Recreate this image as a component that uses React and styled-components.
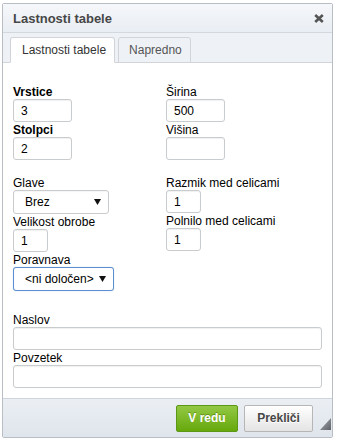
import styled, { createGlobalStyle } from "styled-components";

const GlobalStyle = createGlobalStyle`
  html, body {
    margin: 0;
    padding: 0;
    background: #ffffff;
  }
  body {
    font-family: "Liberation Sans", Arial, sans-serif;
    font-size: 12px;
    color: #000;
  }
`;

const Dialog = styled.div`
  position: relative;
  width: 331px;
  margin: 3px 0 0 2px;
  border: 1px solid #b9bec5;
  border-radius: 2px;
  background: #ffffff;
  box-sizing: border-box;
  width: 331px;
`;

const TitleBar = styled.div`
  display: flex;
  align-items: center;
  justify-content: space-between;
  height: 28px;
  padding: 0 8px 0 10px;
  background: linear-gradient(#f5f7fa, #e9eef4);
  border-bottom: 1px solid #d3d8de;
  font-size: 13px;
  font-weight: bold;
  color: #474747;
`;

const CloseButton = styled.span`
  display: flex;
  width: 10px;
  height: 9px;
  margin-top: 1px;
  cursor: pointer;
`;

const TabBar = styled.div`
  display: flex;
  align-items: flex-end;
  gap: 3px;
  height: 29px;
  padding-left: 7px;
  background: #eef1f5;
  border-bottom: 1px solid #d1d5da;
`;

const Tab = styled.div`
  display: flex;
  align-items: center;
  height: 24px;
  padding: ${({ $active }) => ($active ? "0 8px 0 11px" : "0 8px 0 10px")};
  margin-bottom: -1px;
  border: 1px solid #d1d5da;
  border-bottom: ${({ $active }) => ($active ? "1px solid #fff" : "1px solid #d1d5da")};
  border-radius: 3px 3px 0 0;
  background: ${({ $active }) => ($active ? "#ffffff" : "#eef1f5")};
  color: ${({ $active }) => ($active ? "#333" : "#555")};
  font-size: 12px;
`;

const Body = styled.div`
  padding: 22px 10px 9px 10px;
`;

const Columns = styled.div`
  display: grid;
  grid-template-columns: 153px 1fr;
  margin-bottom: ${({ $gap }) => $gap}px;
`;

const Column = styled.div`
  display: flex;
  flex-direction: column;
`;

const Field = styled.div`
  display: flex;
  flex-direction: column;
  align-items: flex-start;
  margin-bottom: 1px;
`;

const Label = styled.label`
  display: block;
  height: 14px;
  line-height: 14px;
  font-weight: ${({ $bold }) => ($bold ? "bold" : "normal")};
  color: #000;
  white-space: nowrap;
`;

const Input = styled.div`
  box-sizing: border-box;
  width: ${({ $w }) => $w}px;
  height: 23px;
  padding-left: 7px;
  display: flex;
  align-items: center;
  border: 1px solid #c9cccf;
  border-radius: 3px;
  box-shadow: inset 0 1px 1px rgba(0, 0, 0, 0.06);
  background: #fff;
  font-size: 12px;
  color: #000;
`;

const Select = styled.div`
  box-sizing: border-box;
  width: ${({ $w }) => $w}px;
  height: 24px;
  display: flex;
  align-items: center;
  justify-content: space-between;
  padding: 0 7px 0 11px;
  border: 1px solid ${({ $focus }) => ($focus ? "#5b8fd0" : "#c9cccf")};
  border-radius: 3px;
  box-shadow: ${({ $focus }) =>
    $focus ? "0 0 1px rgba(91, 143, 208, 0.6)" : "inset 0 1px 1px rgba(0,0,0,0.04)"};
  background: #fff;
  color: #000;
  white-space: nowrap;
`;

const Footer = styled.div`
  display: flex;
  align-items: center;
  justify-content: flex-end;
  gap: 6px;
  height: 38px;
  padding-right: 19px;
  background: linear-gradient(#ebeff4, #dfe5ec);
  border-top: 1px solid #cfd5dc;
`;

const Button = styled.div`
  box-sizing: border-box;
  display: flex;
  align-items: center;
  justify-content: center;
  height: 27px;
  width: ${({ $w }) => $w}px;
  border-radius: 2px;
  font-weight: bold;
  font-size: 12px;
  cursor: pointer;
  border: 1px solid ${({ $ok }) => ($ok ? "#5c9816" : "#b6b6b6")};
  background: ${({ $ok }) =>
    $ok ? "linear-gradient(#93c844, #66a80c)" : "linear-gradient(#ffffff, #e4e4e4)"};
  color: ${({ $ok }) => ($ok ? "#ffffff" : "#474747")};
  text-shadow: ${({ $ok }) => ($ok ? "0 -1px 0 rgba(60, 100, 0, 0.5)" : "0 1px 0 #fff")};
`;

const Resizer = styled.svg`
  position: absolute;
  right: 1px;
  bottom: 7px;
`;

const Arrow = () => (
  <svg width="7" height="6" viewBox="0 0 7 6">
    <polygon points="0,0 7,0 3.5,6" fill="#111" />
  </svg>
);

export default function App() {
  return (
    <>
      <GlobalStyle />
      <Dialog>
        <TitleBar>
          <span>Lastnosti tabele</span>
          <CloseButton>
            <svg width="10" height="9" viewBox="0 0 10 9">
              <path d="M1.2 1 L8.8 8 M8.8 1 L1.2 8" stroke="#555" strokeWidth="2.6" />
            </svg>
          </CloseButton>
        </TitleBar>
        <TabBar>
          <Tab $active>Lastnosti tabele</Tab>
          <Tab>Napredno</Tab>
        </TabBar>
        <Body>
          <Columns $gap={15}>
            <Column>
              <Field>
                <Label $bold>Vrstice</Label>
                <Input $w={59}>3</Input>
              </Field>
              <Field>
                <Label $bold>Stolpci</Label>
                <Input $w={59}>2</Input>
              </Field>
            </Column>
            <Column>
              <Field>
                <Label>Širina</Label>
                <Input $w={59}>500</Input>
              </Field>
              <Field>
                <Label>Višina</Label>
                <Input $w={59} />
              </Field>
            </Column>
          </Columns>
          <Columns $gap={21}>
            <Column>
              <Field>
                <Label>Glave</Label>
                <Select $w={96}>
                  Brez
                  <Arrow />
                </Select>
              </Field>
              <Field>
                <Label>Velikost obrobe</Label>
                <Input $w={35}>1</Input>
              </Field>
              <Field>
                <Label>Poravnava</Label>
                <Select $w={101} $focus>
                  &lt;ni določen&gt;
                  <Arrow />
                </Select>
              </Field>
            </Column>
            <Column>
              <Field>
                <Label>Razmik med celicami</Label>
                <Input $w={35}>1</Input>
              </Field>
              <Field>
                <Label>Polnilo med celicami</Label>
                <Input $w={35}>1</Input>
              </Field>
            </Column>
          </Columns>
          <Field>
            <Label>Naslov</Label>
            <Input $w={309} />
          </Field>
          <Field>
            <Label>Povzetek</Label>
            <Input $w={309} />
          </Field>
        </Body>
        <Footer>
          <Button $ok $w={62}>V redu</Button>
          <Button $w={69}>Prekliči</Button>
        </Footer>
        <Resizer width="11" height="12" viewBox="0 0 11 12">
          <defs>
            <linearGradient id="grip" x1="0" y1="0" x2="1" y2="1">
              <stop offset="0" stopColor="#a9adb3" />
              <stop offset="1" stopColor="#5e6166" />
            </linearGradient>
          </defs>
          <polygon points="11,0 11,12 0,12" fill="url(#grip)" />
        </Resizer>
      </Dialog>
    </>
  );
}
